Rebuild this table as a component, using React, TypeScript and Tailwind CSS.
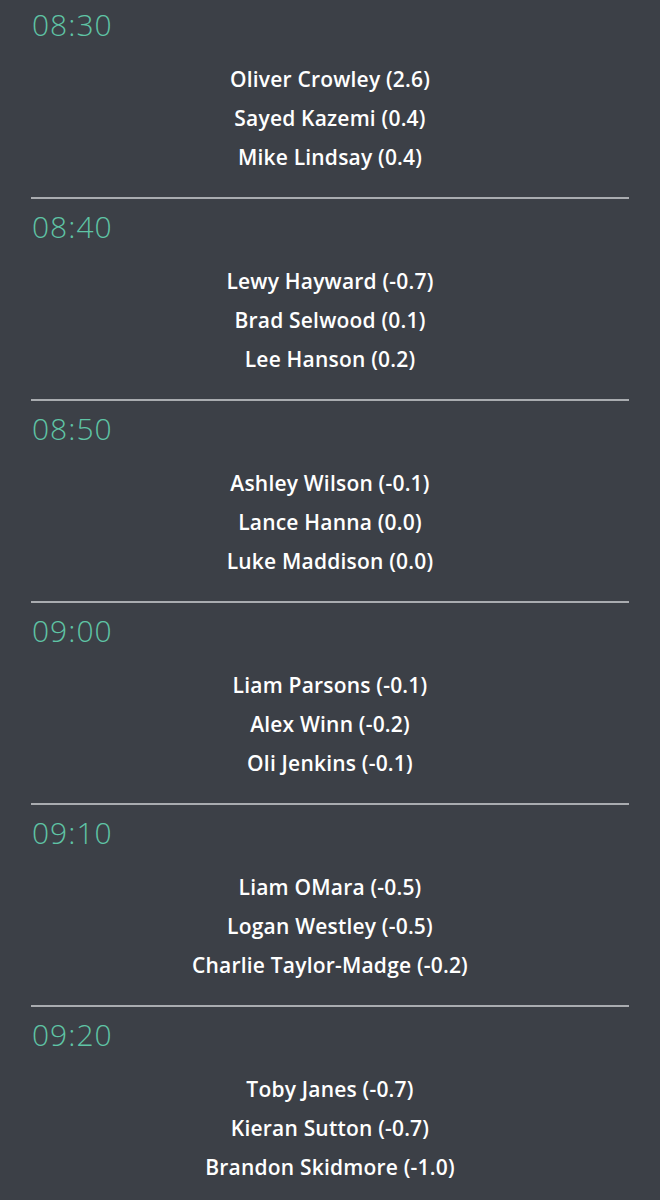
const slots = [
  { time: "08:30", names: ["Oliver Crowley (2.6)", "Sayed Kazemi (0.4)", "Mike Lindsay (0.4)"] },
  { time: "08:40", names: ["Lewy Hayward (-0.7)", "Brad Selwood (0.1)", "Lee Hanson (0.2)"] },
  { time: "08:50", names: ["Ashley Wilson (-0.1)", "Lance Hanna (0.0)", "Luke Maddison (0.0)"] },
  { time: "09:00", names: ["Liam Parsons (-0.1)", "Alex Winn (-0.2)", "Oli Jenkins (-0.1)"] },
  { time: "09:10", names: ["Liam OMara (-0.5)", "Logan Westley (-0.5)", "Charlie Taylor-Madge (-0.2)"] },
  { time: "09:20", names: ["Toby Janes (-0.7)", "Kieran Sutton (-0.7)", "Brandon Skidmore (-1.0)"] },
];

export default function App() {
  return (
    <div className="min-h-[1200px] w-[660px] bg-[#3c4047] px-[31px] font-['Open_Sans',sans-serif] overflow-hidden">
      {slots.map((s, i) => (
        <div key={s.time} className={`border-[#a9acb0] ${i === 0 ? "pt-[7px]" : "pt-[10px]"} border-b-2 pb-[20px]`}>
          <div className="h-[36px] leading-[36px] text-[30px] font-light text-[#5fc4a5] pl-[1px] tracking-[1px]">
            {s.time}
          </div>
          <div className="mt-[17px] flex flex-col items-center">
            {s.names.map((n) => (
              <div key={n} className="h-[39px] leading-[39px] text-[21px] font-semibold text-white tracking-[0.2px]">
                {n}
              </div>
            ))}
          </div>
        </div>
      ))}
    </div>
  );
}
